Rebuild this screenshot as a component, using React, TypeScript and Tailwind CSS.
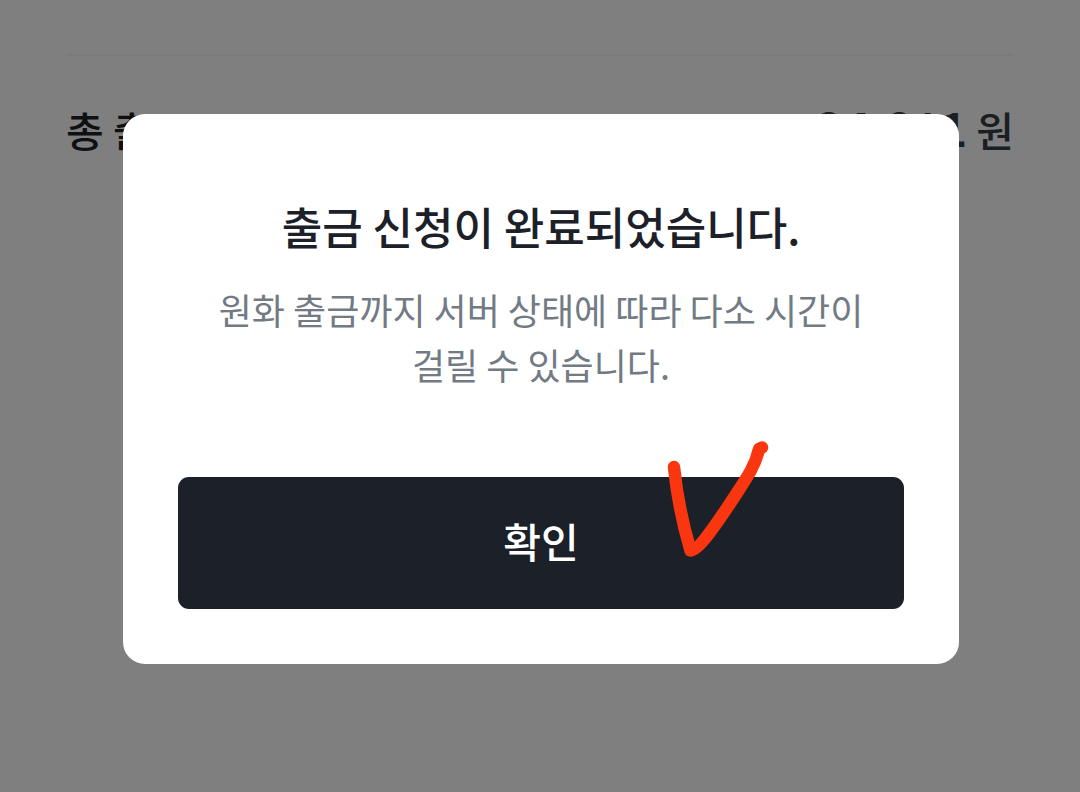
export default function App() {
  return (
    <div className="min-h-screen bg-white font-['Noto_Sans_CJK_KR','Noto_Sans_CJK_SC',sans-serif] text-[#1c2028]">
      <main className="px-[66px] pt-[54px]">
        <div className="flex items-baseline justify-between border-t-2 border-[#f3f4f6] pt-[39px] text-[41px] leading-[64px] font-medium">
          <span>총 출금</span>
          <span className="text-[#373c47]">
            <span className="text-[46px] font-bold">24,811</span> 원
          </span>
        </div>
      </main>

      <div className="fixed inset-0 flex items-start justify-center bg-black/50 pt-[114px] pr-[121px] pl-[123px]">
        <div
          role="dialog"
          aria-modal="true"
          aria-labelledby="dialog-title"
          aria-describedby="dialog-text"
          className="w-full rounded-[22px] bg-white px-[55px] pt-20 pb-[55px] text-center"
        >
          <h1 id="dialog-title" className="text-[44px] leading-[64px] font-medium">
            출금 신청이 완료되었습니다.
          </h1>
          <p id="dialog-text" className="mt-6 text-[36px] leading-[55px] text-[#727a84]">
            원화 출금까지 서버 상태에 따라 다소 시간이
            <br />
            걸릴 수 있습니다.
          </p>
          <div className="relative mt-[85px]">
            <button
              type="button"
              className="h-[132px] w-full rounded-[11px] bg-[#1c2028] pb-1 text-[41px] font-medium text-white"
            >
              확인
            </button>
            <svg
              aria-hidden="true"
              viewBox="0 0 160 160"
              className="pointer-events-none absolute -top-[57px] right-[104px] size-40"
              fill="none"
              stroke="#f93610"
              strokeWidth="12.5"
              strokeLinecap="round"
              strokeLinejoin="round"
            >
              <path d="M34 47 C37 77 43 105 50.5 130.5 C58 131 75 106 91 82 C106 59 115 47 119 29" />
              <path d="M120 28.500 L122 27.500" />
            </svg>
          </div>
        </div>
      </div>
    </div>
  );
}
